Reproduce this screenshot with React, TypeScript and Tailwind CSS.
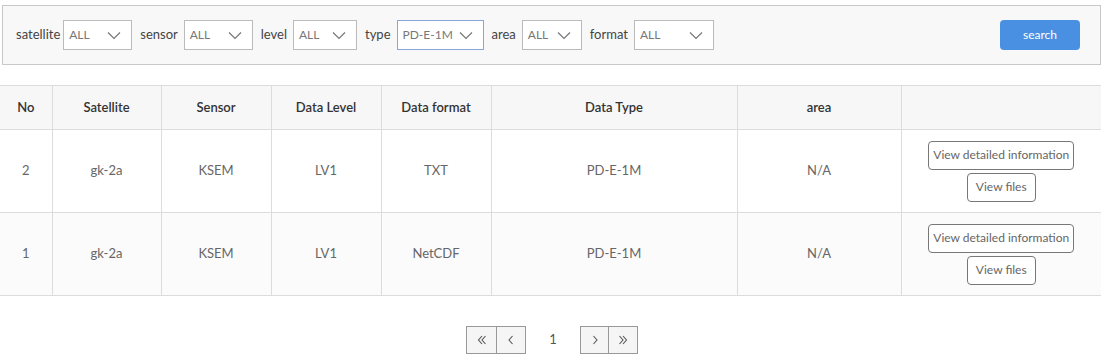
import React from "react";

const font = { fontFamily: '"Lato", "Open Sans", sans-serif' };

function Chevron() {
  return (
    <svg width="14" height="9" viewBox="0 0 14 9" fill="none" stroke="#777" strokeWidth="1.2">
      <path d="M1 1.5 L7 7.5 L13 1.5" />
    </svg>
  );
}

function PageIcon({ d }: { d: string }) {
  return (
    <svg width="12" height="12" viewBox="0 0 12 12" fill="none" stroke="#555" strokeWidth="1.1">
      <path d={d} />
    </svg>
  );
}

function Select({ value, w, active }: { value: string; w: string; active?: boolean }) {
  return (
    <div
      className={`flex items-center justify-between h-[30px] bg-white pl-[5px] pr-[10px] text-[12px] text-[#777] border ${w} ${
        active ? "border-[#8aa6d8]" : "border-[#bbb]"
      }`}
    >
      <span>{value}</span>
      <Chevron />
    </div>
  );
}

const rows = [
  { no: "2", sat: "gk-2a", sensor: "KSEM", lvl: "LV1", fmt: "TXT", type: "PD-E-1M", area: "N/A", bg: "bg-white" },
  { no: "1", sat: "gk-2a", sensor: "KSEM", lvl: "LV1", fmt: "NetCDF", type: "PD-E-1M", area: "N/A", bg: "bg-[#fbfbfb]" },
];

export default function App() {
  return (
    <div className="w-[1109px] h-[361px] bg-white text-[13px]" style={font}>
      <div className="pt-[5px] w-[1101px]">
        <div className="ml-[2px] h-[60px] border border-[#c8c8c8] bg-[#f8f8f8] flex items-center pl-[13px] pr-[20px]">
          <span className="text-[#444] mr-[3px]">satellite</span>
          <Select value="ALL" w="w-[69px]" />
          <span className="text-[#444] ml-[8px] mr-[6px]">sensor</span>
          <Select value="ALL" w="w-[69px]" />
          <span className="text-[#444] ml-[8px] mr-[6px]">level</span>
          <Select value="ALL" w="w-[64px]" />
          <span className="text-[#444] ml-[8px] mr-[6px]">type</span>
          <Select value="PD-E-1M" w="w-[87px]" active />
          <span className="text-[#444] ml-[8px] mr-[6px]">area</span>
          <Select value="ALL" w="w-[60px]" />
          <span className="text-[#444] ml-[8px] mr-[6px]">format</span>
          <Select value="ALL" w="w-[80px]" />
          <div className="flex-1" />
          <button className="w-[80px] h-[30px] rounded-[4px] bg-[#4a90e2] text-white text-[12px]">search</button>
        </div>
      </div>

      <table className="mt-[20px] w-[1101px] table-fixed border-collapse text-center">
        <colgroup>
          <col className="w-[52px]" />
          <col className="w-[109px]" />
          <col className="w-[110px]" />
          <col className="w-[110px]" />
          <col className="w-[110px]" />
          <col className="w-[246px]" />
          <col className="w-[164px]" />
          <col className="w-[200px]" />
        </colgroup>
        <thead>
          <tr className="h-[44px] bg-[#f7f7f7] text-[#333]">
            {["No", "Satellite", "Sensor", "Data Level", "Data format", "Data Type", "area", ""].map((h, i) => (
              <th
                key={i}
                className={`font-semibold border-t border-b border-[#dcdcdc] ${i > 0 ? "border-l" : ""}`}
              >
                {h}
              </th>
            ))}
          </tr>
        </thead>
        <tbody>
          {rows.map((r) => (
            <tr key={r.no} className={`h-[83px] text-[#666] ${r.bg}`}>
              {[r.no, r.sat, r.sensor, r.lvl, r.fmt, r.type, r.area].map((c, i) => (
                <td key={i} className={`border-b border-[#dcdcdc] ${i > 0 ? "border-l" : ""}`}>
                  {c}
                </td>
              ))}
              <td className="border-b border-l border-[#dcdcdc]">
                <div className="flex flex-col items-center gap-[3px]">
                  <button className="h-[29px] px-[4px] border border-[#777] rounded-[4px] bg-white text-[12px] text-[#666]">
                    View detailed information
                  </button>
                  <button className="h-[29px] px-[8px] border border-[#777] rounded-[4px] bg-white text-[12px] text-[#666]">
                    View files
                  </button>
                </div>
              </td>
            </tr>
          ))}
        </tbody>
      </table>

      <div className="w-[1101px] flex justify-center items-center mt-[30px] text-[#555]">
        <div className="flex ml-[3px]">
          <button className="w-[31px] h-[28px] border border-[#999] bg-[#f5f5f5] flex items-center justify-center">
            <PageIcon d="M6 2 L2.5 6 L6 10 M9.5 2 L6 6 L9.5 10" />
          </button>
          <button className="w-[29px] h-[28px] border border-l-0 border-[#999] bg-[#f5f5f5] flex items-center justify-center">
            <PageIcon d="M7.5 2 L4 6 L7.5 10" />
          </button>
        </div>
        <span className="w-[54px] text-center text-[13px]">1</span>
        <div className="flex">
          <button className="w-[29px] h-[28px] border border-[#999] bg-[#f5f5f5] flex items-center justify-center">
            <PageIcon d="M4.5 2 L8 6 L4.5 10" />
          </button>
          <button className="w-[29px] h-[28px] border border-l-0 border-[#999] bg-[#f5f5f5] flex items-center justify-center">
            <PageIcon d="M2.5 2 L6 6 L2.5 10 M6 2 L9.5 6 L6 10" />
          </button>
        </div>
      </div>
    </div>
  );
}
